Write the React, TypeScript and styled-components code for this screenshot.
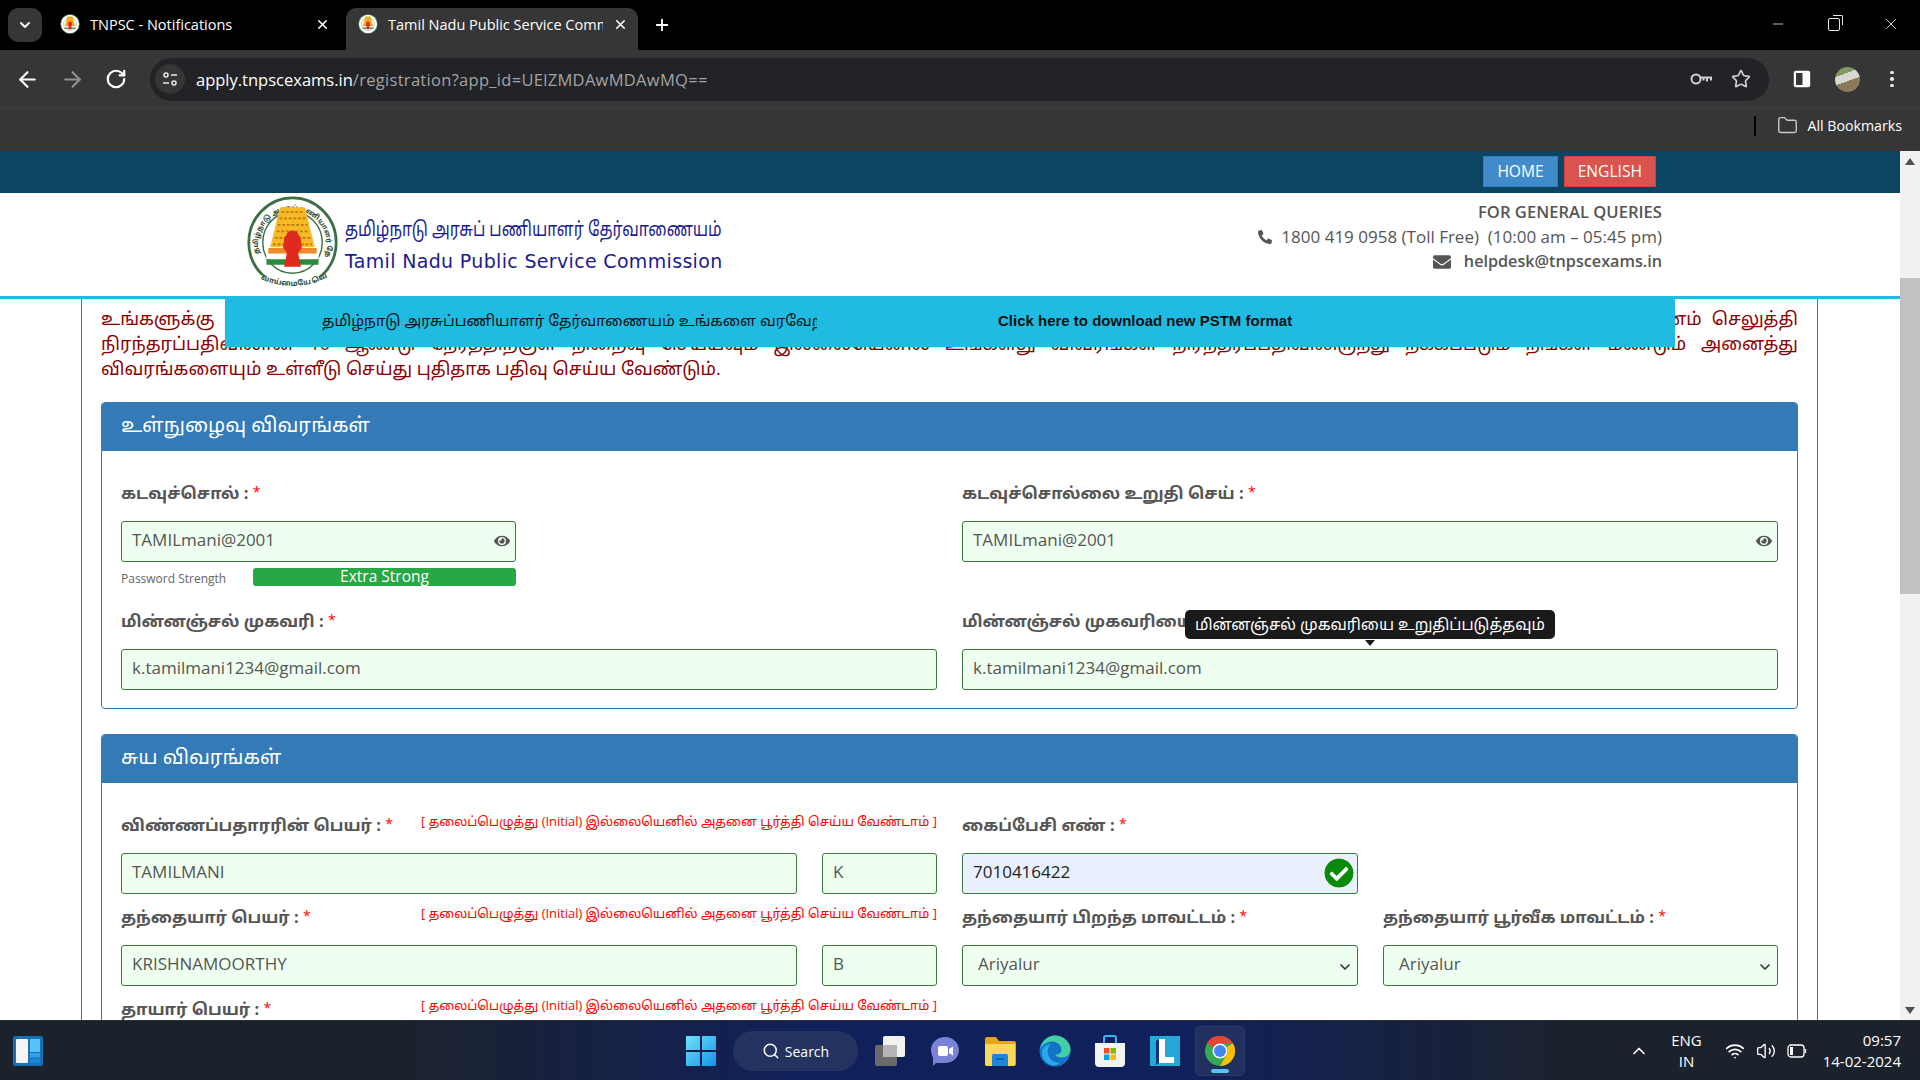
import React from "react";
import styled, { createGlobalStyle } from "styled-components";
import { ArrowLeft, ArrowRight, RotateCw, Star, Plus, X, ChevronDown, ChevronUp, Minus, Folder, Search, Wifi, Volume2 } from "lucide-react";
import { FaPhoneAlt, FaEnvelope, FaCheckCircle, FaEye } from "react-icons/fa";

const UI_FONT = `"Open Sans", "Noto Sans", "Noto Sans Tamil", "Liberation Sans", sans-serif`;

const GlobalStyle = createGlobalStyle`
  html, body { margin: 0; padding: 0; height: 100%; overflow: hidden; }
  body { font-family: ${UI_FONT}; }
  * { box-sizing: border-box; }
`;

const Screen = styled.div`
  width: 1920px;
  height: 1080px;
  display: flex;
  flex-direction: column;
  overflow: hidden;
  background: #fff;
`;

/* browser chrome */
const TabStrip = styled.div`
  height: 50px;
  flex: none;
  background: #000;
  display: flex;
  align-items: flex-end;
  padding-left: 8px;
  color: #fff;
`;

const TabSearch = styled.div`
  width: 34px;
  height: 34px;
  margin-bottom: 8px;
  border-radius: 10px;
  background: #363636;
  display: flex;
  align-items: center;
  justify-content: center;
`;

const Tab = styled.div`
  width: 292px;
  height: 42px;
  margin-left: 6px;
  padding: 0 10px 9px 12px;
  display: flex;
  align-items: center;
  gap: 10px;
  border-radius: 10px 10px 0 0;
  font-size: 14.5px;
  white-space: nowrap;
`;

const ActiveTab = styled(Tab)`
  background: #363636;
`;

const TabTitle = styled.span`
  flex: 1;
  overflow: hidden;
`;

const NewTab = styled.div`
  margin: 0 0 16px 15px;
  display: flex;
`;

const WindowButtons = styled.div`
  margin-left: auto;
  align-self: flex-start;
  display: flex;
  align-items: center;
  gap: 42px;
  height: 48px;
  padding-right: 20px;
  color: #e8e8e8;
`;

const RestoreIcon = styled.div`
  position: relative;
  width: 12px;
  height: 13px;
  border: 1.5px solid #e8e8e8;
  border-radius: 2px;
  &::after {
    content: "";
    position: absolute;
    top: -4px;
    right: -4px;
    width: 9px;
    height: 9px;
    border-top: 1.5px solid #e8e8e8;
    border-right: 1.5px solid #e8e8e8;
    border-radius: 0 2px 0 0;
  }
`;

const Toolbar = styled.div`
  height: 57px;
  flex: none;
  background: #363636;
  display: flex;
  align-items: center;
  padding: 1px 0 0 15px;
  color: #fff;
`;

const NavButtons = styled.div`
  width: 135px;
  display: flex;
  align-items: center;
  gap: 20px;
`;

const AddressBar = styled.div`
  width: 1619px;
  height: 43px;
  border-radius: 22px;
  background: #212327;
  display: flex;
  align-items: center;
  padding: 0 18px 0 5px;
  font-size: 16.5px;
`;

const SiteIcon = styled.div`
  width: 30px;
  height: 30px;
  border-radius: 50%;
  background: #363636;
  margin-right: 11px;
  display: flex;
  align-items: center;
  justify-content: center;
`;

const Host = styled.span`
  color: #fff;
`;

const UrlPath = styled.span`
  color: #a3a3a3;
  letter-spacing: 0.3px;
`;

const AddressIcons = styled.div`
  margin-left: auto;
  display: flex;
  align-items: center;
  gap: 19px;
  color: #d0d0d0;
`;

const ToolbarRight = styled.div`
  flex: 1;
  display: flex;
  align-items: center;
  padding-left: 24px;
  gap: 24px;
`;

const Avatar = styled.div`
  width: 25px;
  height: 25px;
  border-radius: 50%;
  background: linear-gradient(160deg, #7f9b5f 0 30%, #d8d8d0 30% 55%, #8a7a5a 55%);
`;

const Kebab = styled.div`
  display: flex;
  flex-direction: column;
  gap: 3px;
  margin-left: 6px;
  span { width: 3.5px; height: 3.5px; border-radius: 50%; background: #e8e8e8; }
`;

const BookmarkBar = styled.div`
  height: 44px;
  flex: none;
  background: #363636;
  border-top: 1px solid #3d3d3d;
  display: flex;
  align-items: center;
  justify-content: flex-end;
  padding: 0 18px 8px 0;
  color: #fff;
  font-size: 14.2px;
`;

const BookmarkDivider = styled.div`
  width: 2px;
  height: 20px;
  background: #000;
  margin-right: 21px;
`;

const BookmarkFolder = styled(Folder)`
  margin-right: 9px;
  color: #c8c8c8;
`;

/* page */
const Viewport = styled.div`
  flex: 1;
  min-height: 0;
  display: flex;
  overflow: hidden;
`;

const Page = styled.div`
  flex: 1;
  min-width: 0;
  position: relative;
  overflow: hidden;
`;

const Scrollbar = styled.div`
  width: 20px;
  flex: none;
  background: #f1f1f1;
  display: flex;
  flex-direction: column;
  align-items: center;
`;

const ScrollArrow = styled.div<{ $down?: boolean }>`
  height: 20px;
  flex: none;
  margin-top: ${p => (p.$down ? "auto" : "0")};
  margin-bottom: ${p => (p.$down ? "0" : "107px")};
  display: flex;
  align-items: center;
  &::before {
    content: "";
    border-left: 5px solid transparent;
    border-right: 5px solid transparent;
    ${p => (p.$down ? "border-top: 7px solid #505050;" : "border-bottom: 7px solid #505050;")}
  }
`;

const ScrollThumb = styled.div`
  width: 20px;
  height: 316px;
  background: #c1c1c1;
`;

const TopBar = styled.div`
  height: 42px;
  background: #0b4562;
  display: flex;
  justify-content: flex-end;
  align-items: flex-start;
  gap: 6px;
  padding: 5px 244px 0 0;
`;

const TopButton = styled.div<{ $color: string; $border: string }>`
  height: 31px;
  padding: 0 13px 2px;
  display: flex;
  align-items: center;
  background: ${p => p.$color};
  border: 1px solid ${p => p.$border};
  color: #fff;
  font-size: 15.6px;
`;

const Masthead = styled.div`
  height: 106px;
  padding: 3px 238px 0 246px;
  display: flex;
  align-items: flex-start;
  border-bottom: 3px solid #1fbbe3;
`;

const Titles = styled.div`
  margin: 19px 0 0 6px;
  display: flex;
  flex-direction: column;
  gap: 5px;
`;

const TamilTitle = styled.div`
  font-size: 20px;
  line-height: 28px;
  color: #1c1c8e;
  white-space: nowrap;
  transform: scaleX(0.792);
  transform-origin: left center;
`;

const EnglishTitle = styled.div`
  font-family: "DejaVu Sans", sans-serif;
  font-size: 19px;
  line-height: 26px;
  letter-spacing: 0.33px;
  color: #1c1c8e;
`;

const Contacts = styled.div`
  margin-left: auto;
  padding-top: 3px;
  display: flex;
  flex-direction: column;
  align-items: flex-end;
  color: #555;
  font-size: 17px;
  line-height: 25px;
`;

const ContactHead = styled.div`
  font-weight: 600;
  font-size: 16.6px;
`;

const ContactLine = styled.div<{ $gap: number; $strong?: boolean }>`
  display: flex;
  align-items: center;
  gap: ${p => p.$gap}px;
  font-weight: ${p => (p.$strong ? 600 : 400)};
  font-size: ${p => (p.$strong ? "16.2px" : "17px")};
`;

const Notice = styled.div`
  position: absolute;
  top: 145px;
  left: 225px;
  width: 1450px;
  height: 51px;
  background: #1fbbe3;
  display: flex;
  align-items: center;
  padding: 0 0 2px 97px;
  font-size: 15px;
  color: #111;
  box-shadow: 0 1px 2px rgba(0, 0, 0, 0.15);
`;

const Marquee = styled.div`
  width: 495px;
  overflow: hidden;
  white-space: nowrap;
`;

const NoticeLink = styled.div`
  margin-left: 181px;
  font-family: "Liberation Sans", sans-serif;
  font-weight: 700;
`;

const Content = styled.div`
  margin: 0 82px 0 81px;
  height: 800px;
  padding: 7px 19px 0 19px;
  border-left: 1px solid #337ab7;
  border-right: 1px solid #337ab7;
`;

const Intro = styled.div`
  color: #8b0000;
  font-size: 18px;
  line-height: 25px;
  margin-bottom: 21px;
`;

const IntroLine = styled.div<{ $last?: boolean }>`
  text-align: justify;
  text-align-last: ${p => (p.$last ? "left" : "justify")};
`;

const Panel = styled.section`
  border: 1px solid #337ab7;
  border-radius: 4px;
  margin-bottom: 25px;
  overflow: hidden;
`;

const PanelHead = styled.h2`
  margin: 0;
  height: 48px;
  padding: 0 19px 4px;
  display: flex;
  align-items: center;
  background: #337ab7;
  color: #fff;
  font-size: 20px;
  font-weight: 400;
`;

const PanelBody = styled.div<{ $rowGap?: number }>`
  padding: 28px 19px 18px;
  display: grid;
  grid-template-columns: 1fr 1fr;
  column-gap: 25px;
  row-gap: ${p => p.$rowGap ?? 0}px;
`;

const Field = styled.div`
  position: relative;
  min-width: 0;
`;

const LabelRow = styled.div`
  height: 42px;
  display: flex;
  align-items: center;
  justify-content: space-between;
  padding-bottom: 14px;
`;

const Label = styled.label`
  color: #555;
  font-size: 16.5px;
  font-weight: 700;
  white-space: nowrap;
`;

const RequiredMark = styled.span`
  position: relative;
  top: -2px;
  color: #f00;
  font-size: 14px;
  font-weight: 400;
`;

const Hint = styled.span`
  margin-bottom: 7px;
  color: #f00;
  font-size: 12.9px;
  white-space: nowrap;
`;

const Box = styled.div<{ $w?: number }>`
  position: relative;
  width: ${p => (p.$w ? `${p.$w}px` : "100%")};
`;

const Input = styled.input<{ $blue?: boolean }>`
  display: block;
  width: 100%;
  height: 41px;
  padding: 0 10px 4px;
  border: 1px solid #3a7a3f;
  border-radius: 3px;
  background: ${p => (p.$blue ? "#e8f0fe" : "#efffef")};
  color: ${p => (p.$blue ? "#222" : "#555")};
  font-family: ${UI_FONT};
  font-size: 17px;
  outline: none;
`;

const Select = styled.div`
  height: 41px;
  padding: 0 15px 4px;
  border: 1px solid #3a7a3f;
  border-radius: 3px;
  background: #efffef;
  color: #555;
  font-size: 17px;
  display: flex;
  align-items: center;
  justify-content: space-between;
`;

const SelectChevron = styled(ChevronDown)`
  margin: 6px -11px 0 0;
  color: #333;
`;

const EyeButton = styled(FaEye)`
  position: absolute;
  right: 6px;
  top: 12px;
  color: #555;
`;

const CheckBadge = styled(FaCheckCircle)`
  position: absolute;
  right: 4px;
  top: 5px;
  color: #0a8a0a;
  background: #fff;
  border-radius: 50%;
`;

const StrengthRow = styled.div`
  width: 395px;
  height: 45px;
  padding-top: 6px;
  display: flex;
  justify-content: space-between;
  align-items: flex-start;
  color: #666;
  font-size: 12px;
  line-height: 22px;
`;

const StrengthBar = styled.div`
  width: 263px;
  height: 18px;
  border-radius: 3px;
  background: #28a745;
  color: #fff;
  font-size: 15.5px;
  line-height: 17px;
  text-align: center;
`;

const Gap = styled.div`
  height: 45px;
`;

const Tooltip = styled.div`
  position: absolute;
  top: 3px;
  left: 223px;
  height: 29px;
  padding: 0 10px;
  display: flex;
  align-items: center;
  border-radius: 5px;
  background: #1a1a1a;
  color: #fff;
  font-size: 15.6px;
  white-space: nowrap;
  z-index: 2;
  &::after {
    content: "";
    position: absolute;
    left: 50%;
    top: 30px;
    margin-left: -5px;
    border-left: 5px solid transparent;
    border-right: 5px solid transparent;
    border-top: 6px solid #1a1a1a;
  }
`;

const NameRow = styled.div`
  display: flex;
  justify-content: space-between;
`;

const SplitCols = styled.div`
  display: grid;
  grid-template-columns: 396px 395px;
  column-gap: 25px;
`;

/* taskbar */
const Taskbar = styled.div`
  height: 60px;
  flex: none;
  position: relative;
  display: flex;
  align-items: center;
  padding: 0 19px 0 13px;
  color: #fff;
  border-top: 1px solid #2b2f3a;
  background: linear-gradient(90deg, #1c222c 0%, #1c222c 20%, #10205a 42%, #10205a 62%, #1c222c 82%, #1c222c 100%);
`;

const Centered = styled.div`
  position: absolute;
  left: 686px;
  top: 0;
  height: 60px;
  display: flex;
  align-items: center;
`;

const SearchPill = styled.div`
  width: 125px;
  height: 40px;
  margin: 0 7px 0 17px;
  border-radius: 20px;
  background: #24325f;
  display: flex;
  align-items: center;
  justify-content: center;
  gap: 5px;
  font-size: 14px;
`;

const TaskIcon = styled.div<{ $active?: boolean }>`
  position: relative;
  width: 50px;
  height: 50px;
  margin-right: 5px;
  border-radius: 5px;
  display: flex;
  align-items: center;
  justify-content: center;
  ${p => p.$active && "background: #22305f; border: 1px solid #2c3a6a;"}
  ${p =>
    p.$active &&
    `&::after {
      content: "";
      position: absolute;
      left: 15px;
      bottom: 2px;
      width: 18px;
      height: 4px;
      border-radius: 2px;
      background: #58c4f5;
    }`}
`;

const Tray = styled.div`
  margin-left: auto;
  display: flex;
  align-items: center;
  font-size: 15px;
  line-height: 21px;
  text-align: center;
`;

const Lang = styled.div`
  margin: 0 23px 0 22px;
`;

const TrayIcons = styled.div`
  display: flex;
  align-items: center;
  gap: 11px;
  margin-right: 16px;
`;

const Clock = styled.div`
  text-align: right;
`;

const Emblem: React.FC<{ size: number; detail?: boolean }> = ({ size, detail }) => (
  <svg width={size} height={size * 1.05} viewBox="0 0 100 105">
    <defs>
      <path id="ring" d="M14 62A37 38 0 1 1 86 62" />
      <path id="ribbon" d="M12 86C30 100 70 100 88 86" />
    </defs>
    <ellipse cx="50" cy="50" rx="47" ry="48" fill="#fff" stroke="#3d6f45" strokeWidth="3" />
    <ellipse cx="50" cy="50" rx="32" ry="33" fill="#fff" stroke="#3d6f45" strokeWidth="1.5" />
    {detail && (
      <text fontSize="7.5" fill="#2c4a30" fontWeight="700">
        <textPath href="#ring">தமிழ்நாடு அரசுப் பணியாளர் தேர்வாணையம்</textPath>
      </text>
    )}
    <path d="M37 12h26l3 10 3 13 5 20H26l5-20 3-13z" fill="#f7b924" />
    <path d="M38 17h24M36 24h28M34 31h32M33 38h34M31 45h38M29 52h42" stroke="#b97a10" strokeWidth="1.8" strokeDasharray="3 2" />
    <path d="M24 56h52v6H24z" fill="#f08a2c" />
    <path d="M22 62h56v6H22z" fill="#fff" />
    <path d="M22 68h56v6H22z" fill="#2d8a3a" />
    <path d="M41 46c0-7 18-7 18 0l1 10-4 5 3 15H41l3-15-4-5z" fill="#e0291f" />
    <circle cx="50" cy="44" r="7" fill="#e0291f" />
    {detail && (
      <>
        <path d="M6 78c16 18 72 18 88 0l3 9c-18 18-76 18-94 0z" fill="#fff" />
        <text fontSize="8" fill="#2c4a30" fontWeight="700">
          <textPath href="#ribbon" startOffset="6%">வாய்மையே வெல்லும்</textPath>
        </text>
      </>
    )}
  </svg>
);

const KeyIcon = () => (
  <svg width="22" height="14" viewBox="0 0 22 14" fill="none" stroke="#d0d0d0" strokeWidth="2">
    <circle cx="6" cy="7" r="4.5" />
    <path d="M10.5 5.5H21V8.5M17 5.5v4M13.5 5.5v3" />
  </svg>
);

const SliderIcon = () => (
  <svg width="16" height="16" viewBox="0 0 16 16" fill="none" stroke="#e8e8e8" strokeWidth="1.5">
    <circle cx="4" cy="4" r="2" />
    <path d="M9 4h6M1 12h6" />
    <circle cx="12" cy="12" r="2" />
  </svg>
);

const SidePanelIcon = () => (
  <svg width="18" height="18" viewBox="0 0 18 18">
    <rect x="0.8" y="0.8" width="16.4" height="16.4" rx="2" fill="#fff" />
    <rect x="3" y="3" width="6.5" height="12" fill="#363636" />
  </svg>
);

const WidgetIcon = () => (
  <svg width="30" height="30" viewBox="0 0 30 30">
    <rect width="30" height="30" rx="2" fill="#1b6fb5" />
    <rect x="3" y="3" width="12" height="24" rx="1" fill="#f4f4f4" />
    <rect x="17" y="3" width="10" height="13" fill="#58c4f5" />
    <rect x="17" y="17" width="10" height="4.5" fill="#2fa2ea" />
    <rect x="17" y="22.5" width="10" height="4.5" fill="#1487dd" />
  </svg>
);

const StartIcon = () => (
  <svg width="30" height="30" viewBox="0 0 30 30">
    <defs>
      <linearGradient id="win" x1="0" y1="0" x2="1" y2="1">
        <stop offset="0" stopColor="#6fe3fb" />
        <stop offset="1" stopColor="#1592e8" />
      </linearGradient>
    </defs>
    <path d="M0 1a1 1 0 0 1 1-1h13v14H0zM16 0h13a1 1 0 0 1 1 1v13H16zM0 16h14v14H1a1 1 0 0 1-1-1zM16 16h14v13a1 1 0 0 1-1 1H16z" fill="url(#win)" />
  </svg>
);

const TaskViewIcon = () => (
  <svg width="32" height="32" viewBox="0 0 32 32">
    <rect x="1" y="10" width="22" height="21" rx="2" fill="#6b6b6b" />
    <rect x="9" y="1" width="22" height="21" rx="2" fill="#f2f2f2" />
    <rect x="9" y="10" width="14" height="12" fill="#b5b5b5" />
  </svg>
);

const TeamsIcon = () => (
  <svg width="30" height="30" viewBox="0 0 30 30">
    <path d="M15 1c8 0 14 6 14 13s-6 13-14 13H6l-3 3v-8C2 19 1 17 1 14 1 7 7 1 15 1z" fill="#7b83d8" />
    <rect x="8" y="10" width="10" height="10" rx="2" fill="#fff" />
    <path d="M19 13l4-2.5v9L19 17z" fill="#fff" />
  </svg>
);

const FilesIcon = () => (
  <svg width="32" height="30" viewBox="0 0 32 30">
    <path d="M1 3a2 2 0 0 1 2-2h9l3 4h15a2 2 0 0 1 2 2v21a2 2 0 0 1-2 2H3a2 2 0 0 1-2-2z" fill="#e5a50f" />
    <path d="M1 8h30v20a2 2 0 0 1-2 2H3a2 2 0 0 1-2-2z" fill="#fbd75b" />
    <path d="M8 20a2 2 0 0 1 2-2h12a2 2 0 0 1 2 2v10H8z" fill="#1c86d8" />
    <rect x="12" y="22" width="8" height="2" fill="#0d5fa8" />
  </svg>
);

const EdgeIcon = () => (
  <svg width="32" height="32" viewBox="0 0 32 32">
    <circle cx="16" cy="16" r="15.5" fill="#1273c7" />
    <path d="M1 15C2 6 9 .5 16 .5c9 0 15.5 7 15.5 14 0 5-4 8-9 8-3 0-6-1-6-3 4 0 6-2 6-5 0-4-4-8-9-8-6 0-11 4-12.5 8.500z" fill="#3fd0a5" />
    <path d="M12 30c-6-2-10-8-9-14 1-4 5-7 9-7-3 3-4 6-3 10 1 5 6 9 12 9-3 2-6 3-9 2z" fill="#2aa7ee" />
  </svg>
);

const StoreIcon = () => (
  <svg width="30" height="32" viewBox="0 0 30 32">
    <path d="M9 8V3a2 2 0 0 1 2-2h8a2 2 0 0 1 2 2v5" fill="none" stroke="#39b5f0" strokeWidth="2" />
    <path d="M0 8h30v20a4 4 0 0 1-4 4H4a4 4 0 0 1-4-4z" fill="#f2f2f2" />
    <rect x="9" y="13" width="5.500" height="5.500" fill="#f25022" />
    <rect x="15.500" y="13" width="5.500" height="5.500" fill="#7fba00" />
    <rect x="9" y="19.500" width="5.500" height="5.500" fill="#00a4ef" />
    <rect x="15.500" y="19.500" width="5.500" height="5.500" fill="#ffb900" />
  </svg>
);

const LIcon = () => (
  <svg width="30" height="30" viewBox="0 0 30 30">
    <rect width="30" height="30" fill="#25a7d8" />
    <path d="M9 27V3h6v18h9v6z" fill="#fff" />
    <path d="M9 27V3L6 5v24z" fill="#10337a" />
  </svg>
);

const ChromeIcon = () => (
  <svg width="30" height="30" viewBox="0 0 30 30">
    <circle cx="15" cy="15" r="15" fill="#34a853" />
    <path d="M15 0a15 15 0 0 1 13 7.500H15a7.500 7.500 0 0 0-6.500 3.750L2 7A15 15 0 0 1 15 0z" fill="#ea4335" />
    <path d="M28 7.500A15 15 0 0 1 15 30l6.500-11.250A7.500 7.500 0 0 0 21.500 11z" fill="#fbbc05" />
    <circle cx="15" cy="15" r="7.500" fill="#fff" />
    <circle cx="15" cy="15" r="6" fill="#4285f4" />
  </svg>
);

const BatteryIcon = () => (
  <svg width="20" height="14" viewBox="0 0 20 14" fill="none" stroke="#fff" strokeWidth="1.300">
    <rect x="1" y="1" width="16" height="12" rx="3" />
    <rect x="3" y="3" width="3" height="8" fill="#fff" stroke="none" />
    <path d="M18.500 5v4" />
  </svg>
);

const INITIAL_HINT = "[ தலைப்பெழுத்து (Initial) இல்லையெனில் அதனை பூர்த்தி செய்ய வேண்டாம் ]";

const Required: React.FC<{ text: string }> = ({ text }) => (
  <Label>
    {text} : <RequiredMark>*</RequiredMark>
  </Label>
);

const NameField: React.FC<{ label: string; name?: string; initial?: string }> = ({ label, name, initial }) => (
  <Field>
    <LabelRow>
      <Required text={label} />
      <Hint>{INITIAL_HINT}</Hint>
    </LabelRow>
    {name && (
      <NameRow>
        <Box $w={676}>
          <Input readOnly value={name} />
        </Box>
        <Box $w={115}>
          <Input readOnly value={initial} />
        </Box>
      </NameRow>
    )}
  </Field>
);

const App: React.FC = () => (
  <Screen>
    <GlobalStyle />
    <TabStrip>
      <TabSearch>
        <ChevronDown size={16} strokeWidth={3} />
      </TabSearch>
      <Tab>
        <Emblem size={20} />
        <TabTitle>TNPSC - Notifications</TabTitle>
        <X size={15} strokeWidth={2.5} />
      </Tab>
      <ActiveTab>
        <Emblem size={20} />
        <TabTitle>Tamil Nadu Public Service Comm</TabTitle>
        <X size={15} strokeWidth={2.5} />
      </ActiveTab>
      <NewTab>
        <Plus size={18} strokeWidth={2.5} />
      </NewTab>
      <WindowButtons>
        <Minus size={16} strokeWidth={1.2} />
        <RestoreIcon />
        <X size={18} strokeWidth={1.2} />
      </WindowButtons>
    </TabStrip>
    <Toolbar>
      <NavButtons>
        <ArrowLeft size={25} strokeWidth={2} />
        <ArrowRight size={25} strokeWidth={2} color="#909090" />
        <RotateCw size={22} strokeWidth={2.4} />
      </NavButtons>
      <AddressBar>
        <SiteIcon>
          <SliderIcon />
        </SiteIcon>
        <Host>apply.tnpscexams.in</Host>
        <UrlPath>/registration?app_id=UElZMDAwMDAwMQ==</UrlPath>
        <AddressIcons>
          <KeyIcon />
          <Star size={20} strokeWidth={2} />
        </AddressIcons>
      </AddressBar>
      <ToolbarRight>
        <SidePanelIcon />
        <Avatar />
        <Kebab>
          <span />
          <span />
          <span />
        </Kebab>
      </ToolbarRight>
    </Toolbar>
    <BookmarkBar>
      <BookmarkDivider />
      <BookmarkFolder size={21} strokeWidth={1.6} />
      All Bookmarks
    </BookmarkBar>
    <Viewport>
      <Page>
        <TopBar>
          <TopButton $color="#428bca" $border="#357ebd">HOME</TopButton>
          <TopButton $color="#d9534f" $border="#d43f3a">ENGLISH</TopButton>
        </TopBar>
        <Masthead>
          <Emblem size={93} detail />
          <Titles>
            <TamilTitle>தமிழ்நாடு அரசுப் பணியாளர் தேர்வாணையம்</TamilTitle>
            <EnglishTitle>Tamil Nadu Public Service Commission</EnglishTitle>
          </Titles>
          <Contacts>
            <ContactHead>FOR GENERAL QUERIES</ContactHead>
            <ContactLine $gap={9}>
              <FaPhoneAlt size={14} />
              1800 419 0958 (Toll Free)&nbsp; (10:00 am – 05:45 pm)
            </ContactLine>
            <ContactLine $gap={13} $strong>
              <FaEnvelope size={18} />
              helpdesk@tnpscexams.in
            </ContactLine>
          </Contacts>
        </Masthead>
        <Notice>
          <Marquee>தமிழ்நாடு அரசுப்பணியாளர் தேர்வாணையம் உங்களை வரவேற்கிறது</Marquee>
          <NoticeLink>Click here to download new PSTM format</NoticeLink>
        </Notice>
        <Content>
          <Intro>
            <IntroLine>உங்களுக்கு ஏற்கனவே ஒருமுறைப்பதிவு கணக்கு இருந்து அதற்கான கட்டணம் செலுத்தி இருந்தால் உங்களது பதிவு மற்றும் கடவுச்சொல்லை பயன்படுத்தி கட்டணம் செலுத்தி</IntroLine>
            <IntroLine>நிரந்தரப்பதிவிலான 10 ஆண்டு நேரத்திற்குள் நிறைவு செய்யவும் இல்லையெனில் உங்களது விவரங்கள் நிரந்தரப்பதிவிலிருந்து நீக்கப்படும் நீங்கள் மீண்டும் அனைத்து</IntroLine>
            <IntroLine $last>விவரங்களையும் உள்ளீடு செய்து புதிதாக பதிவு செய்ய வேண்டும்.</IntroLine>
          </Intro>
          <Panel>
            <PanelHead>உள்நுழைவு விவரங்கள்</PanelHead>
            <PanelBody>
              <Field>
                <LabelRow>
                  <Required text="கடவுச்சொல்" />
                </LabelRow>
                <Box $w={395}>
                  <Input readOnly value="TAMILmani@2001" />
                  <EyeButton size={16} />
                </Box>
                <StrengthRow>
                  Password Strength
                  <StrengthBar>Extra Strong</StrengthBar>
                </StrengthRow>
              </Field>
              <Field>
                <LabelRow>
                  <Required text="கடவுச்சொல்லை உறுதி செய்" />
                </LabelRow>
                <Box>
                  <Input readOnly value="TAMILmani@2001" />
                  <EyeButton size={16} />
                </Box>
                <Gap />
              </Field>
              <Field>
                <LabelRow>
                  <Required text="மின்னஞ்சல் முகவரி" />
                </LabelRow>
                <Input readOnly value="k.tamilmani1234@gmail.com" />
              </Field>
              <Field>
                <LabelRow>
                  <Required text="மின்னஞ்சல் முகவரியை உறுதிப்படுத்தவும்" />
                </LabelRow>
                <Tooltip>மின்னஞ்சல் முகவரியை உறுதிப்படுத்தவும்</Tooltip>
                <Input readOnly value="k.tamilmani1234@gmail.com" />
              </Field>
            </PanelBody>
          </Panel>
          <Panel>
            <PanelHead>சுய விவரங்கள்</PanelHead>
            <PanelBody $rowGap={9}>
              <NameField label="விண்ணப்பதாரரின் பெயர்" name="TAMILMANI" initial="K" />
              <Field>
                <LabelRow>
                  <Required text="கைப்பேசி எண்" />
                </LabelRow>
                <Box $w={396}>
                  <Input $blue readOnly value="7010416422" />
                  <CheckBadge size={30} />
                </Box>
              </Field>
              <NameField label="தந்தையார் பெயர்" name="KRISHNAMOORTHY" initial="B" />
              <SplitCols>
                <Field>
                  <LabelRow>
                    <Required text="தந்தையார் பிறந்த மாவட்டம்" />
                  </LabelRow>
                  <Select>
                    Ariyalur
                    <SelectChevron size={16} strokeWidth={2.5} />
                  </Select>
                </Field>
                <Field>
                  <LabelRow>
                    <Required text="தந்தையார் பூர்வீக மாவட்டம்" />
                  </LabelRow>
                  <Select>
                    Ariyalur
                    <SelectChevron size={16} strokeWidth={2.5} />
                  </Select>
                </Field>
              </SplitCols>
              <NameField label="தாயார் பெயர்" />
            </PanelBody>
          </Panel>
        </Content>
      </Page>
      <Scrollbar>
        <ScrollArrow />
        <ScrollThumb />
        <ScrollArrow $down />
      </Scrollbar>
    </Viewport>
    <Taskbar>
      <WidgetIcon />
      <Centered>
        <StartIcon />
        <SearchPill>
          <Search size={18} strokeWidth={2} />
          Search
        </SearchPill>
        <TaskIcon><TaskViewIcon /></TaskIcon>
        <TaskIcon><TeamsIcon /></TaskIcon>
        <TaskIcon><FilesIcon /></TaskIcon>
        <TaskIcon><EdgeIcon /></TaskIcon>
        <TaskIcon><StoreIcon /></TaskIcon>
        <TaskIcon><LIcon /></TaskIcon>
        <TaskIcon $active><ChromeIcon /></TaskIcon>
      </Centered>
      <Tray>
        <ChevronUp size={20} strokeWidth={2} />
        <Lang>
          ENG
          <br />
          IN
        </Lang>
        <TrayIcons>
          <Wifi size={20} strokeWidth={2} />
          <Volume2 size={20} strokeWidth={1.6} />
          <BatteryIcon />
        </TrayIcons>
        <Clock>
          09:57
          <br />
          14-02-2024
        </Clock>
      </Tray>
    </Taskbar>
  </Screen>
);

export default App;
